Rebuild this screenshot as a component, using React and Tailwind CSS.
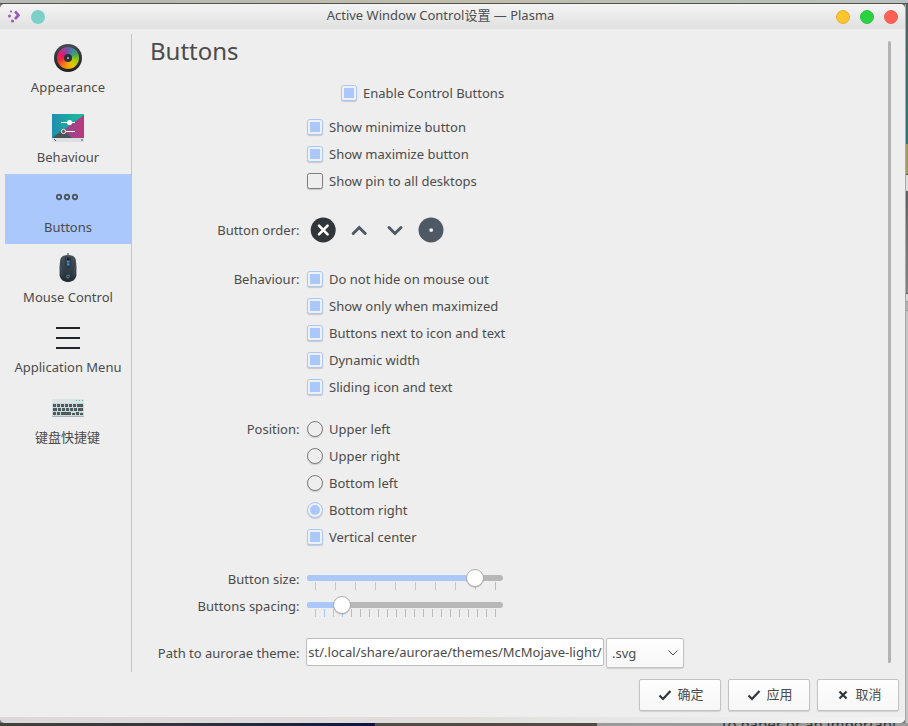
import React from "react";

function Check({ on }) {
  return (
    <span
      className={
        "mb-px flex h-4 w-4 shrink-0 items-center justify-center rounded-[2.5px] border shadow-[0_1px_1px_rgba(0,0,0,0.16)] " +
        (on ? "border-[#a9c8fa] bg-[#f0f0f0]" : "border-[#7d7d7d] bg-[#eeeeee]")
      }
    >
      {on && <span className="h-[10px] w-[10px] bg-[#aac8fb]" />}
    </span>
  );
}

function Radio({ on }) {
  return (
    <span
      className={
        "mb-px flex h-4 w-4 shrink-0 items-center justify-center rounded-full border shadow-[0_1px_1px_rgba(0,0,0,0.16)] " +
        (on ? "border-[#a9c8fa] bg-[#f0f0f0]" : "border-[#7d7d7d] bg-[#eeeeee]")
      }
    >
      {on && <span className="h-[10px] w-[10px] rounded-full bg-[#aac8fb]" />}
    </span>
  );
}

function Row({ label, children, className = "h-[27px]", labelClass = "" }) {
  return (
    <div className={"flex items-center " + className}>
      <span className={"w-[149.5px] shrink-0 text-right whitespace-nowrap " + labelClass}>{label}</span>
      <div className="ml-[7.5px] flex items-center">{children}</div>
    </div>
  );
}

function Option({ label, text, on = true, radio = false }) {
  return (
    <Row label={label}>
      {radio ? <Radio on={on} /> : <Check on={on} />}
      <span className="ml-[6px]">{text}</span>
    </Row>
  );
}

function Slider({ value, ticks, step }) {
  return (
    <svg width="198" height="27" viewBox="0 0 198 27" className="overflow-visible">
      <rect x="0" y="9" width="196" height="6" rx="3" fill="#b7b7b7" />
      <rect x="0" y="9" width={value} height="6" rx="3" fill="#aac8fb" />
      {Array.from({ length: ticks }, (_, i) => (
        <rect
          key={i}
          x={Math.round(8 + i * step)}
          y="16"
          width="1"
          height="8"
          fill={8 + i * step <= value + 2 ? "#aac8fb" : "#bbbbbb"}
        />
      ))}
      <circle cx={value} cy="13" r="9" fill="#000" opacity=".13" />
      <circle cx={value} cy="12" r="8.5" fill="#fff" stroke="#acacac" />
    </svg>
  );
}

function ColorWheel() {
  return (
    <span className="flex h-7 w-7 items-center justify-center rounded-full bg-linear-to-b from-[#454b52] to-[#202124]">
      <span className="flex h-[22px] w-[22px] items-center justify-center rounded-full bg-[conic-gradient(#7158a8,#3b8da0_35deg,#46a852_65deg,#a5c816_105deg,#dfca00_145deg,#f5a500_180deg,#f5701d_220deg,#ee263b_260deg,#e81869_295deg,#a73b92_330deg,#7158a8)]">
        <span className="flex h-2 w-2 items-center justify-center rounded-full bg-[#2b3036]">
          <span className="h-[2px] w-[2px] rounded-full bg-[#b8bdc1]" />
        </span>
      </span>
    </span>
  );
}

function SettingsPicture() {
  return (
    <svg width="32" height="28" viewBox="0 0 32 28">
      <defs>
        <linearGradient id="sky" x1="0" x2="1">
          <stop stopColor="#218eaf" />
          <stop offset="1" stopColor="#1abf97" />
        </linearGradient>
        <linearGradient id="rose" x1="0" x2="1">
          <stop stopColor="#8c4b91" />
          <stop offset="1" stopColor="#bd397e" />
        </linearGradient>
      </defs>
      <path d="M0 0h32v24H0z" fill="url(#sky)" />
      <path d="M32 1v23H19L10 17z" fill="url(#rose)" />
      <path d="M0 24l11-8 9 8z" fill="#465653" />
      <path d="M0 24h32v4H0z" fill="#dcdfe3" />
      <path d="M2 25l2 2M29 26h2" stroke="#4d5358" />
      <path d="M9 8.5h14M14 17.5h9" stroke="#fff" />
      <circle cx="17.5" cy="8.5" r="2.6" fill="#fff" />
      <circle cx="11.5" cy="17.5" r="2.1" fill="#66575b" stroke="#f4eef0" />
    </svg>
  );
}

function Dots() {
  return (
    <svg width="22" height="32" viewBox="0 0 22 32" fill="none" stroke="#4d5968" strokeWidth="1.9" className="mr-[2px]">
      <circle cx="3" cy="15" r="2.2" />
      <circle cx="11" cy="15" r="2.2" />
      <circle cx="19" cy="15" r="2.2" />
    </svg>
  );
}

function Mouse() {
  return (
    <svg width="20" height="30" viewBox="0 0 20 30">
      <defs>
        <linearGradient id="shell" x1="0" y1="0" x2="0" y2="1">
          <stop stopColor="#46535c" />
          <stop offset="1" stopColor="#202c36" />
        </linearGradient>
      </defs>
      <path d="M9.500 0h1v3h-1z" fill="#222c34" />
      <path d="M5 3Q10 .8 15 3Q18 4.500 18 9L18.500 14L18.300 19L18.500 22C17.500 27 14 29 10 29S2.500 27 1.500 22L1.700 19L1.500 14L2 9Q2 4.500 5 3z" fill="url(#shell)" />
      <path d="M7.500 3.500v9l1.500 2h2l1.500-2v-9" fill="none" stroke="#25313a" strokeWidth=".8" />
      <path d="M2.500 12q2 6 1.500 11M17.500 12q-2 6-1.500 11" fill="none" stroke="#55626b" strokeWidth=".6" />
      <path d="M9 8h2.400v1.600H9zM9 10.600h2.400v1.600H9z" fill="#249be4" />
      <path d="M9 4.500h2.400V7H9z" fill="#141d24" />
      <path d="M8.500 23.500q0-2 3-1M8.500 24.500q2 1.500 3-1" fill="none" stroke="#89949b" strokeWidth=".8" />
    </svg>
  );
}

function MenuLines() {
  return (
    <svg width="24" height="24" viewBox="0 0 24 24" fill="#232629">
      <path d="M0 1h24v2H0zM0 11h24v2H0zM0 21h24v2H0z" />
    </svg>
  );
}

function Keyboard() {
  return (
    <svg width="32" height="18" viewBox="0 0 32 18">
      <path d="M0 0h32v18H0z" fill="#cdd7dc" />
      <path d="M0 0h32v4H0z" fill="#dce2e4" />
      <path d="M0 17h32v1H0z" fill="#a6b3bb" />
      <path d="M24 1h1v1h-1zM27 1h1v1h-1zM30 1h1v1h-1z" fill="#1fcf91" />
      <path d="M1 5h3v3H1zM5 5h3v3H5zM9 5h3v3H9zM13 5h3v3h-3zM17 5h3v3h-3zM21 5h3v3h-3zM25 5h6v3h-6zM1 9h4v3H1zM6 9h3v3H6zM10 9h3v3h-3zM14 9h3v3h-3zM18 9h3v3h-3zM22 9h3v3h-3zM26 9h5v3h-5zM1 13h3v3H1zM5 13h3v3H5zM9 13h10v3H9zM20 14h3v2h-3zM24 13h3v3h-3zM28 14h3v2h-3z" fill="#4b5a5b" />
    </svg>
  );
}

const pages = [
  { name: "Appearance", icon: <ColorWheel />, track: "tracking-[0.15px]" },
  { name: "Behaviour", icon: <SettingsPicture />, track: "tracking-normal" },
  { name: "Buttons", icon: <Dots />, active: true, track: "tracking-normal" },
  { name: "Mouse Control", icon: <Mouse />, track: "tracking-normal" },
  { name: "Application Menu", icon: <MenuLines />, track: "tracking-normal" },
  { name: "键盘快捷键", icon: <Keyboard />, track: "pr-px" },
];

function Sidebar() {
  return (
    <nav className="mt-[5px] h-[638px] w-[127px] border-r border-[#a9c8fa]">
      {pages.map((p) => (
        <div key={p.name} className={"flex h-[70px] flex-col items-center " + (p.active ? "bg-[#aac8fb]" : "")}>
          <span className="mt-2 flex h-8 items-center justify-center">{p.icon}</span>
          <span className={"mt-[3px] h-5 leading-5 whitespace-nowrap " + p.track}>{p.name}</span>
        </div>
      ))}
    </nav>
  );
}

function Tick() {
  return (
    <svg width="14" height="14" viewBox="0 0 14 14" fill="none" stroke="#31363b" strokeWidth="2.2">
      <path d="M1.500 7.500l3.500 3.500L12.500 3" />
    </svg>
  );
}

function Cross() {
  return (
    <svg width="14" height="14" viewBox="0 0 14 14" fill="none" stroke="#31363b" strokeWidth="2.2">
      <path d="M3.500 3.500l7 7M10.500 3.500l-7 7" />
    </svg>
  );
}

function Action({ icon, children }) {
  return (
    <button className="flex h-8 w-[82px] items-center justify-center gap-[5px] rounded-[2px] border border-[#c2c2c2] bg-linear-to-b from-[#fefefe] to-[#f7f7f7] pl-[2px] shadow-[0_1px_1px_rgba(0,0,0,0.12)]">
      {icon}
      <span>{children}</span>
    </button>
  );
}

function TitleBar() {
  return (
    <header className="flex h-[25px] shrink-0 items-center bg-linear-to-b from-[#f4f4f4] to-[#e0e0e0]">
      <svg width="12" height="13" viewBox="0 0 12 13" className="ml-2 shrink-0">
        <g fill="#9b59b6">
          <circle cx="3" cy="1.500" r="1.100" />
          <circle cx="1.500" cy="6" r="1.500" />
          <circle cx="4.500" cy="11" r="1.500" />
        </g>
        <path d="M7 1.500l3.500 3.700L7 9" fill="none" stroke="#9b59b6" strokeWidth="2.600" />
      </svg>
      <span className="ml-[11px] h-[14px] w-[14px] shrink-0 rounded-full bg-[#7dd0c8]" />
      <span className="flex-1 pb-[3px] text-center leading-[22px] text-[#4d4d4d]">Active Window Control设置 — Plasma</span>
      <span className="mr-[7px] flex gap-[10px]">
        <span className="h-[14px] w-[14px] rounded-full border border-[#e3b233] bg-[#fec62e]" />
        <span className="h-[14px] w-[14px] rounded-full border border-[#2bc43f] bg-[#29d241]" />
        <span className="h-[14px] w-[14px] rounded-full border border-[#ea6257] bg-[#ff5f55]" />
      </span>
    </header>
  );
}

function OrderButtons() {
  return (
    <svg width="140" height="28" viewBox="0 0 140 28" fill="none">
      <circle cx="16.200" cy="14" r="12.500" fill="#31363b" />
      <path d="M12 9.700l8.600 8.600M20.600 9.700L12 18.300" stroke="#fff" strokeWidth="2.600" strokeLinecap="round" />
      <path d="M46.200 17.500l6-6 6 6" stroke="#4f5965" strokeWidth="3" strokeLinecap="round" />
      <path d="M82 11.500l6 6 6-6" stroke="#4f5965" strokeWidth="3" strokeLinecap="round" />
      <circle cx="124" cy="14" r="12.500" fill="#4f5965" />
      <rect x="122.500" y="12.500" width="3.300" height="3.300" rx=".8" fill="#f4f4f4" />
    </svg>
  );
}

export default function App() {
  return (
    <div className="flex h-[726px] w-[908px] flex-col overflow-hidden bg-[#747474] font-['Noto_Sans','Noto_Sans_CJK_SC',sans-serif] text-[13px] text-[#4b4b4b]">
      <div className="h-[3px] shrink-0 bg-linear-to-r from-[#b6b9b4] via-[#bebdad] to-[#b8c2c0]" />
      <div className="h-px shrink-0 bg-[#53534b]" />
      <div className="flex h-[719px] shrink-0">
        <div className="flex w-[905px] flex-col overflow-hidden rounded-[5px] bg-[#eeeeee]">
          <TitleBar />
          <div className="flex h-[643px]">
            <div className="pl-[5px]">
              <Sidebar />
            </div>
            <main className="w-[756px] pl-[18px]">
              <h1 className="mt-[4px] h-[36px] text-[24px] leading-[36px]">Buttons</h1>
              <div className="mt-[11px] flex h-[27px] items-center pl-[191px]">
                <Check on />
                <span className="ml-[6px]">Enable Control Buttons</span>
              </div>
              <div className="mt-[7px]">
                <Option text="Show minimize button" />
                <Option text="Show maximize button" />
                <Option text="Show pin to all desktops" on={false} />
              </div>
              <Row label="Button order:" className="mt-[21px] h-[28px]" labelClass="pt-px">
                <OrderButtons />
              </Row>
              <div className="mt-[22px]">
                <Option label="Behaviour:" text="Do not hide on mouse out" />
                <Option text="Show only when maximized" />
                <Option text="Buttons next to icon and text" />
                <Option text="Dynamic width" />
                <Option text="Sliding icon and text" />
              </div>
              <div className="mt-[15px]">
                <Option label="Position:" text="Upper left" radio on={false} />
                <Option text="Upper right" radio on={false} />
                <Option text="Bottom left" radio on={false} />
                <Option text="Bottom right" radio />
                <Option text="Vertical center" />
              </div>
              <div className="mt-[15px]">
                <Row label="Button size:">
                  <Slider value={168} ticks={10} step={20} />
                </Row>
                <Row label="Buttons spacing:">
                  <Slider value={35} ticks={21} step={9} />
                </Row>
              </div>
              <Row label="Path to aurorae theme:" className="mt-[18px] h-[30px]" labelClass="pt-px">
                <div className="-ml-px flex h-7 w-[298px] items-center justify-end self-start overflow-hidden rounded-[2px] border border-[#bdbdbd] bg-white pr-[1.5px] pt-px whitespace-nowrap">
                  st/.local/share/aurorae/themes/McMojave-light/
                </div>
                <div className="ml-[2px] flex h-[30px] w-[78px] items-center justify-between rounded-[2px] border border-[#c2c2c2] bg-linear-to-b from-[#fefefe] to-[#f7f7f7] pr-[5px] pl-[5px] shadow-[0_1px_1px_rgba(0,0,0,0.12)]">
                  <span className="pt-px">.svg</span>
                  <svg width="10" height="6" viewBox="0 0 10 6" fill="none" stroke="#4b4b4b">
                    <path d="M.5.5L5 5 9.500.5" />
                  </svg>
                </div>
              </Row>
            </main>
            <div className="mt-[12px] h-[622px] w-[3px] rounded-full bg-[#b3b3b3]" />
          </div>
          <footer className="flex h-[45px] shrink-0 items-start justify-end gap-[7px] pt-[7px] pr-[6px]">
            <Action icon={<Tick />}>确定</Action>
            <Action icon={<Tick />}>应用</Action>
            <Action icon={<Cross />}>取消</Action>
          </footer>
          <div className="h-[6px] bg-linear-to-r from-[#dad8d8] via-[#dfdedd] to-[#f3f3f3]" />
        </div>
        <div className="flex w-[3px] flex-col border-l border-[#aaa9a5]">
          <div className="h-[140px] bg-linear-to-b from-[#50625f] to-[#2f7479]" />
          <div className="h-[30px] bg-[#a49b65]" />
          <div className="h-[17px] border-t border-[#555555] bg-[#dddddd]" />
          <div className="h-[103px] border-b border-[#555555] bg-linear-to-b from-[#5e6062] via-[#777777] to-[#858585]" />
          <div className="h-[7px] bg-[#d5d5d5]" />
          <div className="h-[10px] border-y border-[#999999] bg-[#b3b3b3]" />
          <div className="flex-1 bg-[#c4c4c4]" />
        </div>
      </div>
      <div className="flex h-[3px] shrink-0">
        <div className="w-[375px] bg-linear-to-r from-[#45413b] via-[#33333d] to-[#10133e]" />
        <div className="w-[222px] border-l border-[#575044] bg-[#514b44]" />
        <div className="flex-1 overflow-hidden bg-[#9a9a9a] pl-[125px] text-[15px] leading-[3px] whitespace-nowrap text-[#333333]">to paper or an important</div>
      </div>
    </div>
  );
}
